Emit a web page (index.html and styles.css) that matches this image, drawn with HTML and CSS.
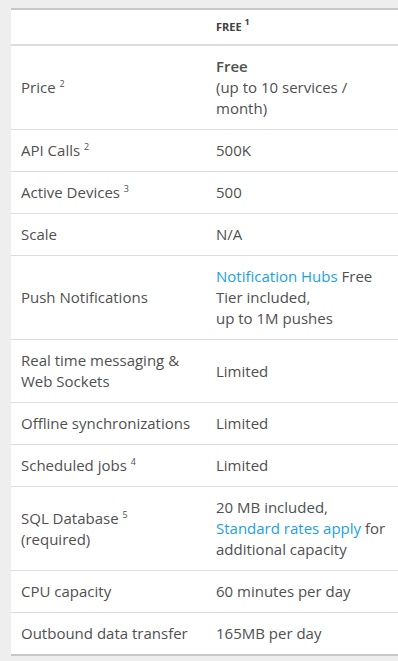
FILE: index.html
```html
<!DOCTYPE html>
<html lang="en">
<head>
    <meta charset="UTF-8">
    <meta name="viewport" content="width=device-width, initial-scale=1.0">
    <title>Mobile Services - Free tier</title>
    <link rel="stylesheet" href="styles.css">
</head>
<body>
    <div class="pricing">
        <table class="tiers">
            <thead>
                <tr>
                    <th class="feature"></th>
                    <th class="tier">Free <sup>1</sup></th>
                </tr>
            </thead>
            <tbody>
                <tr>
                    <td>Price <sup>2</sup></td>
                    <td><strong>Free</strong><br>(up to 10 services / month)</td>
                </tr>
                <tr>
                    <td>API Calls <sup>2</sup></td>
                    <td>500K</td>
                </tr>
                <tr>
                    <td>Active Devices <sup>3</sup></td>
                    <td>500</td>
                </tr>
                <tr>
                    <td>Scale</td>
                    <td>N/A</td>
                </tr>
                <tr>
                    <td>Push Notifications</td>
                    <td><a href="#">Notification Hubs</a> Free Tier included,<br>up to 1M pushes</td>
                </tr>
                <tr>
                    <td>Real time messaging &amp; Web Sockets</td>
                    <td>Limited</td>
                </tr>
                <tr>
                    <td>Offline synchronizations</td>
                    <td>Limited</td>
                </tr>
                <tr>
                    <td>Scheduled jobs <sup>4</sup></td>
                    <td>Limited</td>
                </tr>
                <tr>
                    <td>SQL Database <sup>5</sup><br>(required)</td>
                    <td>20 MB included,<br><a href="#">Standard rates apply</a> for additional capacity</td>
                </tr>
                <tr>
                    <td>CPU capacity</td>
                    <td>60 minutes per day</td>
                </tr>
                <tr>
                    <td>Outbound data transfer</td>
                    <td>165MB per day</td>
                </tr>
            </tbody>
        </table>
    </div>
</body>
</html>
```

FILE: styles.css
```css
body {
    margin: 0;
    padding: 8px 0 0 11px;
    background-color: #eeeeee;
    font-family: "Open Sans", Arial, sans-serif;
    font-size: 15px;
    color: #505050;
}
.pricing {
    background: white;
    border-top: 2px solid #c8c8c8;
    border-bottom: 2px solid #c8c8c8;
}
.tiers {
    width: 100%;
    border-collapse: collapse;
}
.tiers th,
.tiers td {
    text-align: left;
    vertical-align: middle;
    padding: 10px 10px;
    line-height: 21px;
}
.tiers td {
    border-bottom: 1px solid #dddddd;
}
.tiers tbody tr:last-child td {
    border-bottom: none;
}
.tiers th {
    height: 14px;
    line-height: 14px;
    border-bottom: 2px solid #dcdcdc;
    font-size: 11px;
    font-weight: bold;
    text-transform: uppercase;
    color: #404040;
}
.tiers .feature {
    width: 175px;
}
.tiers sup {
    font-size: 9px;
    line-height: 0;
    vertical-align: 6px;
}
.tiers strong {
    font-weight: 600;
}
.tiers a {
    color: #1ba1e2;
    text-decoration: none;
}
```
